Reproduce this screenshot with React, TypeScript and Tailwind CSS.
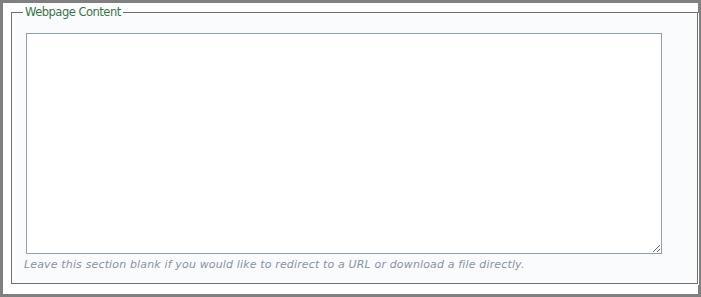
export default function App() {
  return (
    <div className="w-[701px] h-[297px] border-[3px] border-[#808080] bg-white pl-[8px] pt-[2px] pb-[10px]">
      <fieldset className="w-[687px] h-full border border-[#6f6f6f] shadow-[inset_1px_1px_0_#ffffff,1px_1px_0_#ffffff] bg-[#fafbfd] pl-[14px] pr-[13px]">
        <legend className="-ml-[3px] px-[2px] text-[11.5px] leading-[14px] text-[#35764a] [font-family:'DejaVu_Sans',Verdana,sans-serif] tracking-[-0.5px]">
          Webpage Content
        </legend>
        <textarea className="mt-[14px] block w-[636px] h-[221px] border border-[#8fa2ab] bg-white" />
        <p className="mt-[4px] text-[11px] leading-[14px] italic text-[#8793a6] [font-family:'DejaVu_Sans',Verdana,sans-serif] tracking-[0.15px] -ml-[2px]">
          Leave this section blank if you would like to redirect to a URL or download a file directly.
        </p>
      </fieldset>
    </div>
  );
}
